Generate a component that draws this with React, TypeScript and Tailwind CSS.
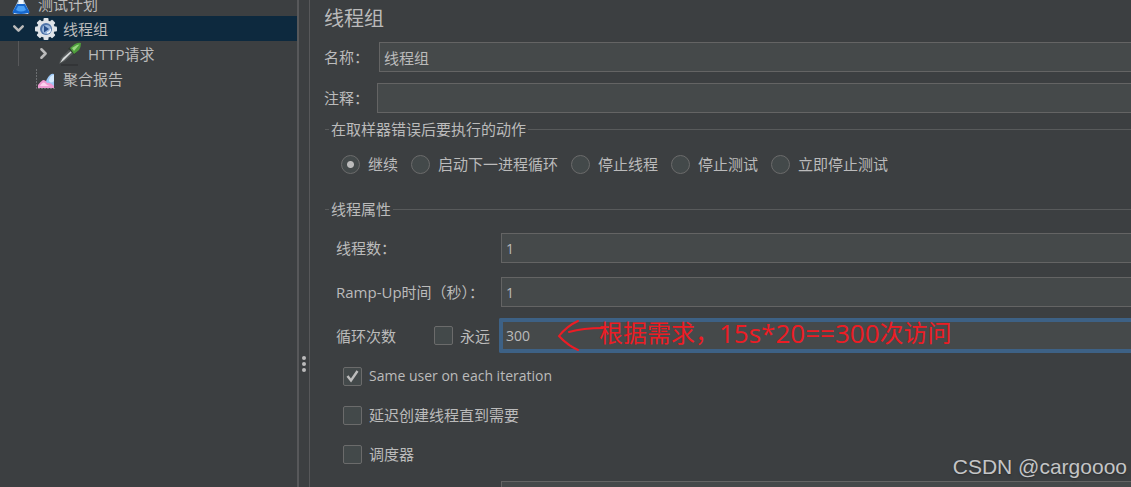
import { useState } from 'react'
import type { ReactNode } from 'react'
import { ChevronDown, ChevronRight } from 'lucide-react'

const errorActions = ['继续', '启动下一进程循环', '停止线程', '停止测试', '立即停止测试']

function FlaskIcon() {
  return (
    <svg viewBox="0 0 22 22" className="w-[22px] h-[22px] shrink-0">
      <path d="M8 1h6v7l5 10q1 3-2 3H5q-3 0-2-3L8 8z" fill="#b9cfe2" />
      <path d="M9 2h4v7l4 9H5l4-9z" fill="#f2f7fb" />
      <path d="M7 11h8l4 7q1 3-2 3H5q-3 0-2-3z" fill="#1668cf" />
      <path d="M8 13h6l2 4q-5 3-10 0z" fill="#4aa0f5" />
      <path d="M4 20q7 2 14 0v1H4z" fill="#d5dde4" />
    </svg>
  )
}

function GearIcon() {
  return (
    <svg viewBox="0 0 22 22" className="w-[22px] h-[22px] shrink-0">
      <g fill="#dfe3e7">
        <circle cx="11" cy="11" r="8.8" />
        <rect x="8.5" y="0" width="5" height="22" rx="1" />
        <rect x="8.5" y="0" width="5" height="22" rx="1" transform="rotate(45 11 11)" />
        <rect x="8.5" y="0" width="5" height="22" rx="1" transform="rotate(90 11 11)" />
        <rect x="8.5" y="0" width="5" height="22" rx="1" transform="rotate(135 11 11)" />
      </g>
      <circle cx="11" cy="11" r="6" fill="#4f74a8" />
      <circle cx="11.500" cy="11.500" r="4.500" fill="#9bb8dc" />
      <path d="M9 7.500l5 3.500-5 3.500z" fill="#274f8b" />
      <path d="M12 14q3-.5 3-3.5l1 1q0 4-4 4z" fill="#eef3f9" />
    </svg>
  )
}

function PipetteIcon() {
  return (
    <svg viewBox="0 0 24 24" className="w-6 h-6 shrink-0">
      <path d="M3 23h17" stroke="#2b2d2e" strokeWidth="1" />
      <path d="M1 22l2-6 9-9 4 4-9 8z" fill="#55595a" />
      <path d="M2 21l3-5 8-7 1 1-8 8z" fill="#d8dbdb" />
      <path d="M11 6l6 6" stroke="#2f3a30" strokeWidth="2.4" />
      <path d="M12 6l5-4q4-2 6-1 0 4-2 7l-5 4z" fill="#4f9e3c" />
      <path d="M14 6l5-3q3-1 2 0l-5 6z" fill="#9ad681" />
    </svg>
  )
}

function ReportIcon() {
  return (
    <svg viewBox="0 0 22 22" className="w-[22px] h-[22px] shrink-0">
      <path d="M1.5 1v19.500h19" fill="none" stroke="#6b6e70" strokeWidth="1" strokeDasharray="2 1" />
      <path d="M10 19q1-9 5-12 2-2 4-1v13z" fill="#9cc8f5" />
      <path d="M14 12q1-5 5-5v6q-3 3-5 0z" fill="#d5eafd" />
      <path d="M3 20v-3q2-3 5-5 3 0 4 3 3-1 7 3v2z" fill="#ef9bd3" />
      <path d="M5 18q3-5 5-3 2 3 6 3z" fill="#fbd3ee" />
    </svg>
  )
}

function GroupBox({ title, children }: { title: string; children: ReactNode }) {
  return (
    <fieldset className="border-t border-[#585a5b] ml-px pl-1 min-w-0">
      <legend className="px-0.5 leading-5">{title}</legend>
      {children}
    </fieldset>
  )
}

function CheckBox({ label, checked = false }: { label: string; checked?: boolean }) {
  return (
    <label className="flex items-center gap-[7px]">
      <span className="grid w-[19px] h-[19px] shrink-0">
        <input
          type="checkbox"
          defaultChecked={checked}
          className="peer appearance-none col-start-1 row-start-1 rounded-xs border border-[#6b6b6b] bg-[#43494a]"
        />
        <svg
          viewBox="0 0 19 19"
          className="col-start-1 row-start-1 hidden peer-checked:block pointer-events-none"
          fill="none"
          stroke="#bdbdbd"
          strokeWidth="2.4"
        >
          <path d="M4.500 9l3.500 4.500 6.500-9.500" />
        </svg>
      </span>
      <span>{label}</span>
    </label>
  )
}

const fieldStyle =
  'flex-1 min-w-0 h-[30px] px-1 bg-[#45494a] border border-r-0 border-[#646464] text-[#bbbbbb] outline-none'

function Sidebar() {
  return (
    <nav className="w-[299px] shrink-0 border-r-2 border-[#57585a] overflow-hidden">
      <ul className="-mt-[9px]">
        <li className="flex items-center h-[25px] pl-2.5 gap-1.5">
          <FlaskIcon />
          测试计划
        </li>
        <li className="flex items-center h-[25px] pl-2.5 bg-[#0d293e]">
          <ChevronDown size={17} strokeWidth={3.500} className="mr-2" />
          <GearIcon />
          <span className="ml-1.5">线程组</span>
        </li>
        <li className="flex items-center h-[25px] pl-[18px]">
          <span className="w-px h-full mr-4 bg-[#57585a]" />
          <ChevronRight size={17} strokeWidth={3.500} className="mr-1.5" />
          <PipetteIcon />
          <span className="ml-1.5">HTTP请求</span>
        </li>
        <li className="flex items-center h-[25px] pl-[35px] gap-1.5">
          <ReportIcon />
          聚合报告
        </li>
      </ul>
    </nav>
  )
}

export default function App() {
  const [action, setAction] = useState(errorActions[0])

  return (
    <div className="relative flex h-screen overflow-hidden bg-[#3c3f41] text-[#bbbbbb] text-[15px] leading-5 font-['Open_Sans','Noto_Sans_CJK_SC',sans-serif]">
      <Sidebar />

      <div className="w-2.5 shrink-0 pt-60 flex flex-col items-center justify-center gap-0.5">
        <span className="w-1 h-1 rounded-full bg-[#bbbbbb]" />
        <span className="w-1 h-1 rounded-full bg-[#bbbbbb]" />
        <span className="w-1 h-1 rounded-full bg-[#bbbbbb]" />
      </div>

      <main className="flex-1 min-w-0 border-l border-[#57585a] pl-[14px]">
        <h1 className="text-[20px] leading-[38px] h-[42px]">线程组</h1>
        <div className="flex items-center">
          <label htmlFor="name" className="w-[55px]">名称：</label>
          <input id="name" defaultValue="线程组" className={fieldStyle} />
        </div>
        <div className="flex items-center mt-[11px] mb-[6px]">
          <label htmlFor="comment" className="w-[53px]">注释：</label>
          <input id="comment" className={fieldStyle} />
        </div>

        <GroupBox title="在取样器错误后要执行的动作">
          <div className="flex items-center gap-[13px] pl-3 pt-[15px] pb-[25px]">
            {errorActions.map((item) => (
              <label key={item} className="flex items-center gap-2 whitespace-nowrap">
                <input
                  type="radio"
                  name="error-action"
                  checked={action === item}
                  onChange={() => setAction(item)}
                  className="appearance-none w-[19px] h-[19px] rounded-full border border-[#6b6b6b] bg-[#43494a] checked:bg-[radial-gradient(circle,#bbbbbb_3px,#43494a_4px)]"
                />
                {item}
              </label>
            ))}
          </div>
        </GroupBox>

        <GroupBox title="线程属性">
          <div className="flex items-center pl-[7px] pt-[14px]">
            <label htmlFor="threads" className="w-[165px]">线程数：</label>
            <input id="threads" defaultValue="1" className={`${fieldStyle} text-sm`} />
          </div>
          <div className="flex items-center pl-[7px] mt-[14px]">
            <label htmlFor="ramp-up" className="w-[165px] whitespace-nowrap">Ramp-Up时间（秒）：</label>
            <input id="ramp-up" defaultValue="1" className={`${fieldStyle} text-sm`} />
          </div>
          <div className="relative flex items-center pl-[7px] mt-[11px]">
            <label htmlFor="loops" className="w-[98px]">循环次数</label>
            <CheckBox label="永远" />
            <input
              id="loops"
              defaultValue="300"
              className="flex-1 min-w-0 h-[35px] ml-[9px] px-[3px] rounded-l-xs bg-[#45494a] border-4 border-r-0 border-[#3d6185] text-sm outline-none"
            />
            <div className="absolute left-[228px] -top-0.5 flex items-center text-[#ed1c24] text-2xl leading-8 pointer-events-none whitespace-nowrap">
              <svg viewBox="0 0 42 34" className="w-[42px] h-[34px] overflow-visible" fill="none" stroke="#ed1c24" strokeWidth="2" strokeLinecap="round">
                <path d="M21 5Q10 10 2 20q8 9 19 14M12 16q14-4 34-4" />
              </svg>
              <span>根据需求，</span>
              <span className="text-[26px]">15s*20==300</span>
              <span>次访问</span>
            </div>
          </div>
          <div className="flex flex-col gap-[19px] pl-[14px] pt-[13px] pb-[17px]">
            <div className="text-sm leading-5">
              <CheckBox label="Same user on each iteration" checked />
            </div>
            <CheckBox label="延迟创建线程直到需要" />
            <CheckBox label="调度器" />
          </div>
          <div className="flex pl-[172px]">
            <input aria-label="持续时间" disabled className={fieldStyle} />
          </div>
        </GroupBox>
      </main>

      <div className="absolute right-1 bottom-1.5 text-[21px] leading-7 text-[#c4c5c6] font-['Liberation_Sans',sans-serif] text-shadow-md">
        CSDN @cargoooo
      </div>
    </div>
  )
}
